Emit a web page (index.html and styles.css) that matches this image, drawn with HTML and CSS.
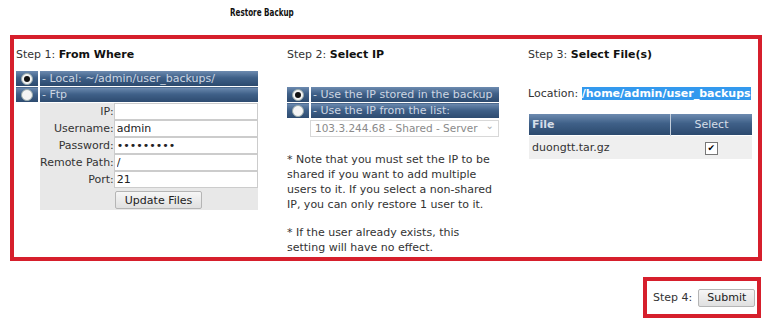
FILE: index.html
```html
<!DOCTYPE html>
<html lang="en">
<head>
    <meta charset="UTF-8">
    <title>Restore Backup</title>
    <link rel="stylesheet" href="styles.css">
</head>
<body>
    <div class="page-title"><span>Restore Backup</span></div>
    <div class="restore-box">
        <div class="step step-one">
            <div class="step-title">Step 1: <b>From Where</b></div>
            <table class="choice-table">
                <tr>
                    <td class="radio-cell"><span class="radio checked"></span></td>
                    <td class="choice-label">- Local: ~/admin/user_backups/</td>
                </tr>
                <tr>
                    <td class="radio-cell"><span class="radio"></span></td>
                    <td class="choice-label">- Ftp</td>
                </tr>
            </table>
            <table class="ftp-table">
                <tr><td class="spacer"></td><td class="ftp-label">IP:</td><td class="ftp-input"><input type="text" value=""></td></tr>
                <tr><td class="spacer"></td><td class="ftp-label">Username:</td><td class="ftp-input"><input type="text" value="admin"></td></tr>
                <tr><td class="spacer"></td><td class="ftp-label">Password:</td><td class="ftp-input"><input type="password" value="123456789"></td></tr>
                <tr><td class="spacer"></td><td class="ftp-label">Remote Path:</td><td class="ftp-input"><input type="text" value="/"></td></tr>
                <tr><td class="spacer"></td><td class="ftp-label">Port:</td><td class="ftp-input"><input type="text" value="21"></td></tr>
                <tr><td class="spacer"></td><td class="ftp-label"></td><td class="ftp-button"><button type="button">Update Files</button></td></tr>
            </table>
        </div>
        <div class="step step-two">
            <div class="step-title">Step 2: <b>Select IP</b></div>
            <table class="choice-table ip-choices">
                <tr>
                    <td class="radio-cell"><span class="radio checked"></span></td>
                    <td class="choice-label">- Use the IP stored in the backup</td>
                </tr>
                <tr>
                    <td class="radio-cell"><span class="radio"></span></td>
                    <td class="choice-label">- Use the IP from the list:</td>
                </tr>
                <tr>
                    <td></td>
                    <td class="select-cell"><div class="fake-select">103.3.244.68 - Shared - Server <span class="arrow">&#8964;</span></div></td>
                </tr>
            </table>
            <p class="note">* Note that you must set the IP to be shared if you want to add multiple users to it. If you select a non-shared IP, you can only restore 1 user to it.</p>
            <p class="note">* If the user already exists, this setting will have no effect.</p>
        </div>
        <div class="step step-three">
            <div class="step-title">Step 3: <b>Select File(s)</b></div>
            <div class="location">Location: <span class="path">/home/admin/user_backups</span></div>
            <table class="file-table">
                <tr>
                    <th class="file-col">File</th>
                    <th class="select-col">Select</th>
                </tr>
                <tr>
                    <td class="file-col">duongtt.tar.gz</td>
                    <td class="select-col"><span class="checkbox">&#10004;</span></td>
                </tr>
            </table>
        </div>
    </div>
    <div class="submit-row">
        <div class="submit-box">
            Step 4: <button type="button">Submit</button>
        </div>
    </div>
</body>
</html>
```

FILE: styles.css
```css
body {
    margin: 0;
    background: #fff;
    font-family: "DejaVu Sans", Verdana, sans-serif;
    font-size: 11px;
    color: #333;
}
.page-title {
    font-family: "DejaVu Sans Condensed", "DejaVu Sans", sans-serif;
    font-weight: bold;
    font-size: 10px;
    color: #111;
    height: 35px;
    line-height: 26px;
    padding-left: 230px;
}
.page-title span {
    display: inline-block;
    transform: scaleX(0.8);
    transform-origin: left center;
}
.restore-box {
    margin-left: 10px;
    width: 742px;
    height: 218px;
    border: 4px solid #d61f2c;
    display: grid;
    grid-template-columns: 271px 241px 1fr;
    padding-left: 2px;
}
.step-title {
    margin-top: 8px;
    height: 16px;
    line-height: 16px;
}
.step-title b {
    color: #111;
}
table {
    border-collapse: collapse;
}
.choice-table {
    margin-top: 8px;
    width: 242px;
}
.choice-table td {
    padding: 0;
}
.radio-cell {
    width: 22px;
    height: 15px;
    background: linear-gradient(#6d8bb0, #3f6088 45%, #2c4a6e);
    border-right: 2px solid #fff;
    border-bottom: 1px solid #fff;
    text-align: center;
    vertical-align: middle;
}
.choice-label {
    height: 15px;
    line-height: 15px;
    background: linear-gradient(#6d8bb0, #3f6088 45%, #2c4a6e);
    border-bottom: 1px solid #fff;
    color: #cdd6e2;
    padding-left: 2px !important;
    white-space: nowrap;
}
.radio {
    display: inline-block;
    width: 10px;
    height: 10px;
    border-radius: 50%;
    background: #f4f4f4;
    border: 1px solid #9aa;
    vertical-align: middle;
    position: relative;
}
.radio.checked::after {
    content: "";
    position: absolute;
    left: 2px;
    top: 2px;
    width: 6px;
    height: 6px;
    border-radius: 50%;
    background: #111;
}
.ftp-table {
    width: 242px;
}
.ftp-table td {
    padding: 0;
    height: 17px;
}
.spacer {
    width: 24px;
}
.ftp-label {
    width: 72px;
    background: #e8e8e8;
    text-align: right;
    color: #333;
    white-space: nowrap;
}
.ftp-input,
.ftp-button {
    background: #e8e8e8;
}
.ftp-input input {
    display: block;
    width: 100%;
    height: 17px;
    box-sizing: border-box;
    border: 1px solid #ccc;
    background: #fff;
    font-family: "DejaVu Sans", sans-serif;
    font-size: 11px;
    padding: 0 2px;
    margin: 0;
    color: #222;
}
.ftp-button {
    height: 22px !important;
}
.ftp-button button,
.submit-box button {
    font-family: "DejaVu Sans", sans-serif;
    font-size: 11px;
    color: #222;
    background: linear-gradient(#f6f6f6, #e0e0e0);
    border: 1px solid #b5b5b5;
    border-radius: 2px;
    height: 18px;
    padding: 0 9px;
    margin: 2px 0 0 1px;
}
.ip-choices {
    width: 212px;
    margin-top: 24px;
}
.select-cell {
    padding: 1px 0 0 0 !important;
}
.fake-select {
    height: 15px;
    line-height: 15px;
    border: 1px solid #d8d8d8;
    color: #8a8a8a;
    padding-left: 4px;
    position: relative;
    background: #fff;
    white-space: nowrap;
    font-size: 10.5px;
}
.fake-select .arrow {
    position: absolute;
    right: 4px;
    top: -3px;
    color: #aaa;
    font-size: 10px;
}
.note {
    margin: 15px 0 0 0;
    line-height: 15px;
    color: #333;
    width: 206px;
}
.note + .note {
    margin-top: 13px;
}
.location {
    margin-top: 24px;
    white-space: nowrap;
    overflow: hidden;
    width: 225px;
}
.path {
    background: #3399ee;
    color: #fff;
    font-weight: bold;
    padding: 1px 0;
}
.file-table {
    margin-top: 14px;
    margin-left: 1px;
    width: 223px;
}
.file-table th {
    height: 21px;
    background: linear-gradient(#6d8bb0, #3f6088 45%, #2c4a6e);
    color: #d6dee8;
    padding: 0 3px;
}
.file-table th.file-col {
    text-align: left;
    border-right: 1px solid #c4cfdc;
}
.file-table th.select-col {
    font-weight: normal;
    width: 75px;
}
.file-table td {
    height: 23px;
    background: #efefef;
    padding: 0 3px;
    border-top: 1px solid #fff;
}
.file-table td.select-col {
    text-align: center;
}
.checkbox {
    display: inline-block;
    width: 11px;
    height: 11px;
    border: 1px solid #777;
    background: #fff;
    font-size: 9px;
    line-height: 11px;
    text-align: center;
    color: #000;
}
.submit-row {
    display: flex;
    justify-content: flex-end;
    padding: 16px 5px 0 0;
}
.submit-box {
    border: 4px solid #d61f2c;
    width: 104px;
    height: 33px;
    display: flex;
    align-items: center;
    padding-left: 6px;
    gap: 6px;
    color: #333;
    margin-right: 2px;
}
.submit-box button {
    margin: 0;
    padding: 0 8px;
}
```
